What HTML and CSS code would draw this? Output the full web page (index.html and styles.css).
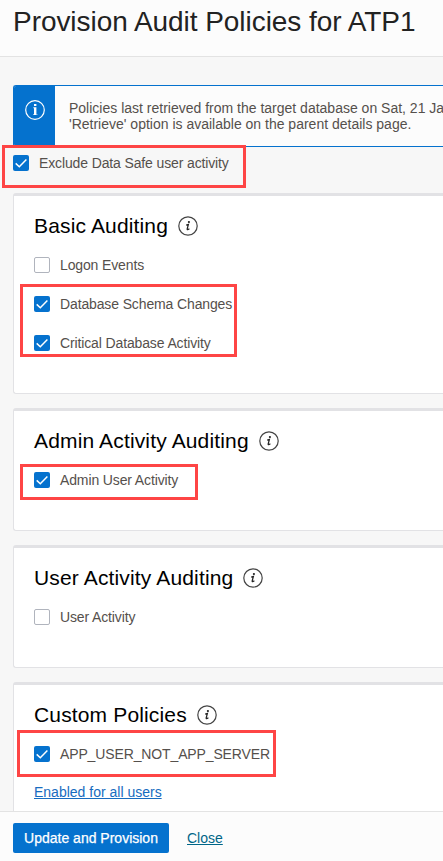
FILE: index.html
```html
<!DOCTYPE html>
<html lang="en">
<head>
<meta charset="utf-8">
<title>Provision Audit Policies</title>
<link rel="stylesheet" href="styles.css">
</head>
<body>
<svg width="0" height="0" class="defs" aria-hidden="true">
  <symbol id="info" viewBox="0 0 20 20">
    <circle cx="10" cy="10" r="9.2" fill="none" stroke="#444" stroke-width="1.2"/>
    <circle cx="10.9" cy="6" r="1.1" fill="#222"/>
    <path d="M8.2 9.1 L10.4 8.4 L9.2 12.8 Q8.9 14.4 11.4 12.8" fill="none" stroke="#222" stroke-width="1.25"/>
  </symbol>
  <symbol id="check" viewBox="0 0 16 16">
    <path d="M2.7 8.4 L6.3 11.7 L13.4 4.5" fill="none" stroke="#fff" stroke-width="1.5"/>
  </symbol>
</svg>
<div class="panel">
  <header class="header"><h1>Provision Audit Policies for ATP1</h1></header>
  <main class="content">
    <div class="banner">
      <div class="banner-icon">
        <svg width="20" height="20" viewBox="0 0 20 20"><circle cx="10" cy="10" r="9.3" fill="none" stroke="#fff" stroke-width="1.2"/><path d="M9 4h2.4v2H9z M9 7.3h2.4v7.7H9z" fill="#fff"/><path d="M8 7.3h1v1H8z M8 14h1v1H8z M11.4 14h1v1h-1z" fill="#fff" opacity=".6"/></svg>
      </div>
      <p class="banner-text">Policies last retrieved from the target database on Sat, 21 Ja<br>'Retrieve' option is available on the parent details page.</p>
    </div>
    <div class="option exclude"><span class="box checked"><svg><use href="#check"/></svg></span><span class="label">Exclude Data Safe user activity</span><i class="mark mark-exclude"></i></div>
    <section class="card tall">
      <h2><span>Basic Auditing</span><svg><use href="#info"/></svg></h2>
      <div class="option"><span class="box"></span><span class="label">Logon Events</span></div>
      <div class="option"><span class="box checked"><svg><use href="#check"/></svg></span><span class="label">Database Schema Changes</span><i class="mark mark-basic"></i></div>
      <div class="option"><span class="box checked"><svg><use href="#check"/></svg></span><span class="label">Critical Database Activity</span></div>
    </section>
    <section class="card">
      <h2><span>Admin Activity Auditing</span><svg><use href="#info"/></svg></h2>
      <div class="option"><span class="box checked"><svg><use href="#check"/></svg></span><span class="label">Admin User Activity</span><i class="mark mark-admin"></i></div>
    </section>
    <section class="card">
      <h2><span>User Activity Auditing</span><svg><use href="#info"/></svg></h2>
      <div class="option"><span class="box"></span><span class="label">User Activity</span></div>
    </section>
    <section class="card tall">
      <h2><span>Custom Policies</span><svg><use href="#info"/></svg></h2>
      <div class="option option-custom"><span class="box checked"><svg><use href="#check"/></svg></span><span class="label">APP_USER_NOT_APP_SERVER</span><i class="mark mark-custom"></i></div>
      <a class="users-link" href="#">Enabled for all users</a>
    </section>
  </main>
  <footer class="footer"><button>Update and Provision</button><a href="#">Close</a></footer>
</div>
</body>
</html>
```

FILE: styles.css
```css
* { box-sizing: border-box; }
body { margin: 0; font: 14px/16px "Liberation Sans", Arial, sans-serif; color: #55504c; }
.defs { display: none; }
.panel { display: flex; flex-direction: column; height: 861px; overflow: hidden; background: #f7f7f7; }
.header { flex: none; height: 57px; padding: 6px 13px; background: #fcfcfc; border-bottom: 1px solid #e3e3e3; }
h1 { margin: 0; font-size: 28px; line-height: 32px; font-weight: 400; letter-spacing: -.05px; color: #222; white-space: nowrap; }
.content { flex: 1; min-height: 0; overflow: hidden; padding: 28px 0 0 13px; }
.banner { display: flex; height: 62px; border: 1px solid #0572ce; border-right: 0; border-radius: 3px 0 0 3px; background: #fcfcfc; overflow: hidden; }
.banner-icon { flex: none; width: 41px; padding: 14px 0 0 11px; background: #0572ce; }
.banner-icon svg { display: block; }
.banner-text { margin: 0; padding: 14px 0 0 14px; white-space: nowrap; }
.option { position: relative; display: flex; align-items: center; gap: 10px; height: 16px; margin-bottom: 23px; }
.exclude { margin: 8px 0 22px; }
.option-custom { margin-bottom: 22px; }
.label { letter-spacing: -.13px; white-space: nowrap; }
.box { flex: none; width: 16px; height: 16px; border: 1px solid #b0b4bd; border-radius: 2px; background: #fff; }
.box.checked { border: 0; background: #0572ce; }
.box svg { display: block; width: 16px; height: 16px; }
.card { height: 123px; margin-bottom: 14px; padding: 19px 0 0 20px; background: #fff; border: 1px solid #e2e2e5; border-top: 3px solid #e2e2e5; border-right: 0; border-radius: 3px 0 0 3px; }
.card.tall { height: 201px; }
h2 { display: flex; align-items: center; gap: 10px; height: 22px; margin: 0 0 20px; font-size: 21px; line-height: 22px; font-weight: 400; letter-spacing: .15px; color: #000; white-space: nowrap; }
h2 svg { flex: none; width: 20px; height: 20px; }
.mark { position: absolute; border: 3px solid #fe4545; }
.mark-exclude { left: -11px; top: -10px; width: 244px; height: 43px; }
.mark-basic { left: -14px; top: -12px; width: 217px; height: 73px; }
.mark-admin { left: -14px; top: -8px; width: 178px; height: 36px; }
.mark-custom { left: -17px; top: -16px; width: 259px; height: 47px; }
.users-link { color: #176cc0; }
.footer { flex: none; display: flex; align-items: center; gap: 18px; height: 50px; padding: 3px 13px 0; background: #fcfcfc; border-top: 1px solid #e3e3e3; }
button { width: 156px; height: 30px; padding: 0; border: 0; border-radius: 2px; background: #0572ce; color: #fff; font: 14px "Liberation Sans", Arial, sans-serif; -webkit-text-stroke: .25px #fff; }
.footer a { color: #006688; }
```
